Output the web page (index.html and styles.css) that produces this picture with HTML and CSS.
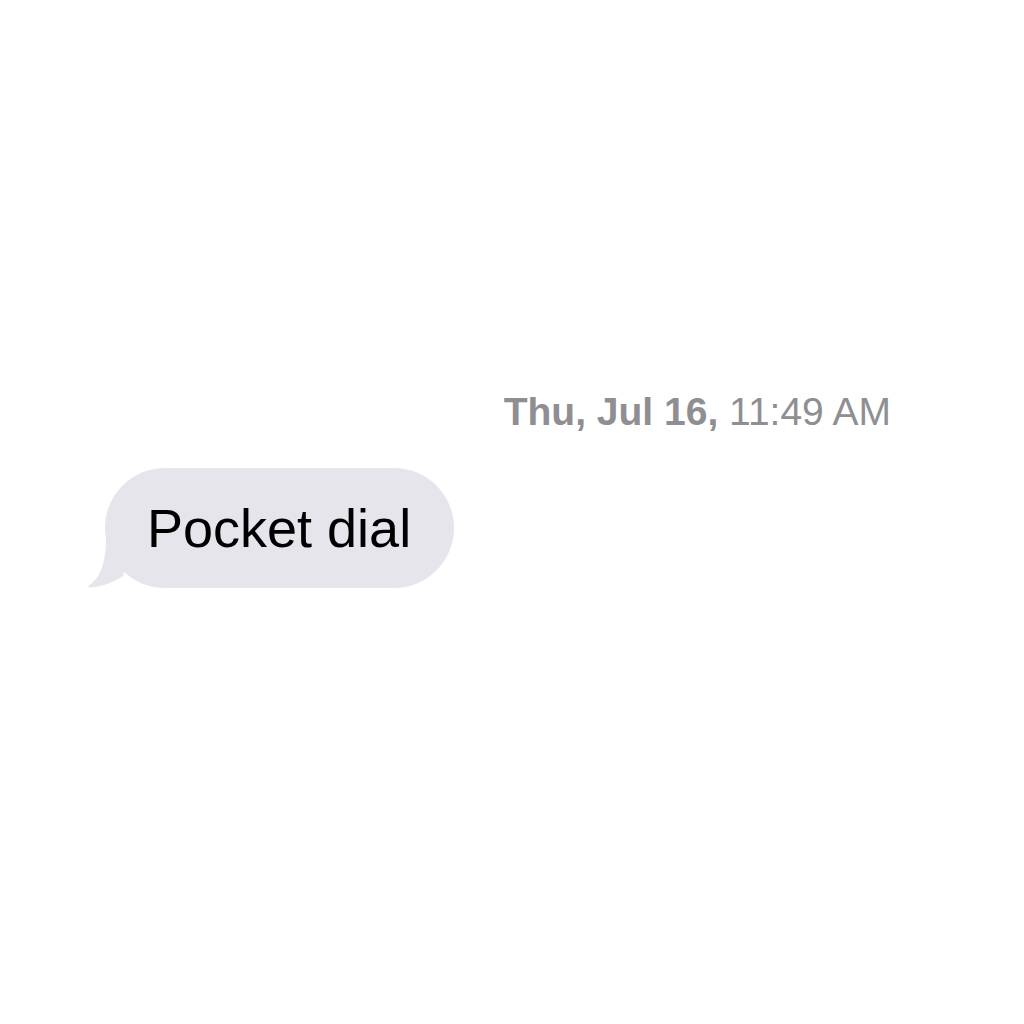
FILE: index.html
```html
<!DOCTYPE html>
<html>
<head>
<meta charset="utf-8">
<link rel="stylesheet" href="styles.css">
</head>
<body>
<main class="thread">
  <div class="timestamp"><span class="day">Thu, Jul 16,</span> 11:49 AM</div>
  <div class="row">
    <div class="bubble">
      <svg class="tail" width="60" height="60" viewBox="0 0 60 60">
        <path d="M21 0 C22 28 18 48 2 58 C14 59 28 54 38 47 L50 0 Z" fill="#e6e5eb"/>
      </svg>
      <span class="msg">Pocket dial</span>
    </div>
  </div>
</main>
</body>
</html>
```
FILE: styles.css
```css
html, body {
  margin: 0;
  padding: 0;
  background: #ffffff;
}
body {
  width: 1024px;
  height: 1024px;
  font-family: "Liberation Sans", Arial, sans-serif;
}
.thread {
  display: flex;
  flex-direction: column;
  padding-top: 389px;
}
.timestamp {
  align-self: flex-end;
  margin-right: 133px;
  font-size: 39px;
  line-height: 46px;
  color: #8e8e93;
}
.day {
  font-weight: bold;
}
.row {
  display: flex;
  padding-left: 105px;
  margin-top: 33px;
}
.bubble {
  position: relative;
  display: flex;
  align-items: center;
  height: 120px;
  padding: 0 43px 0 42px;
  border-radius: 60px;
  background: #e6e5eb;
}
.tail {
  position: absolute;
  left: -20px;
  bottom: -1px;
}
.msg {
  position: relative;
  font-size: 54px;
  color: #000;
}
```
